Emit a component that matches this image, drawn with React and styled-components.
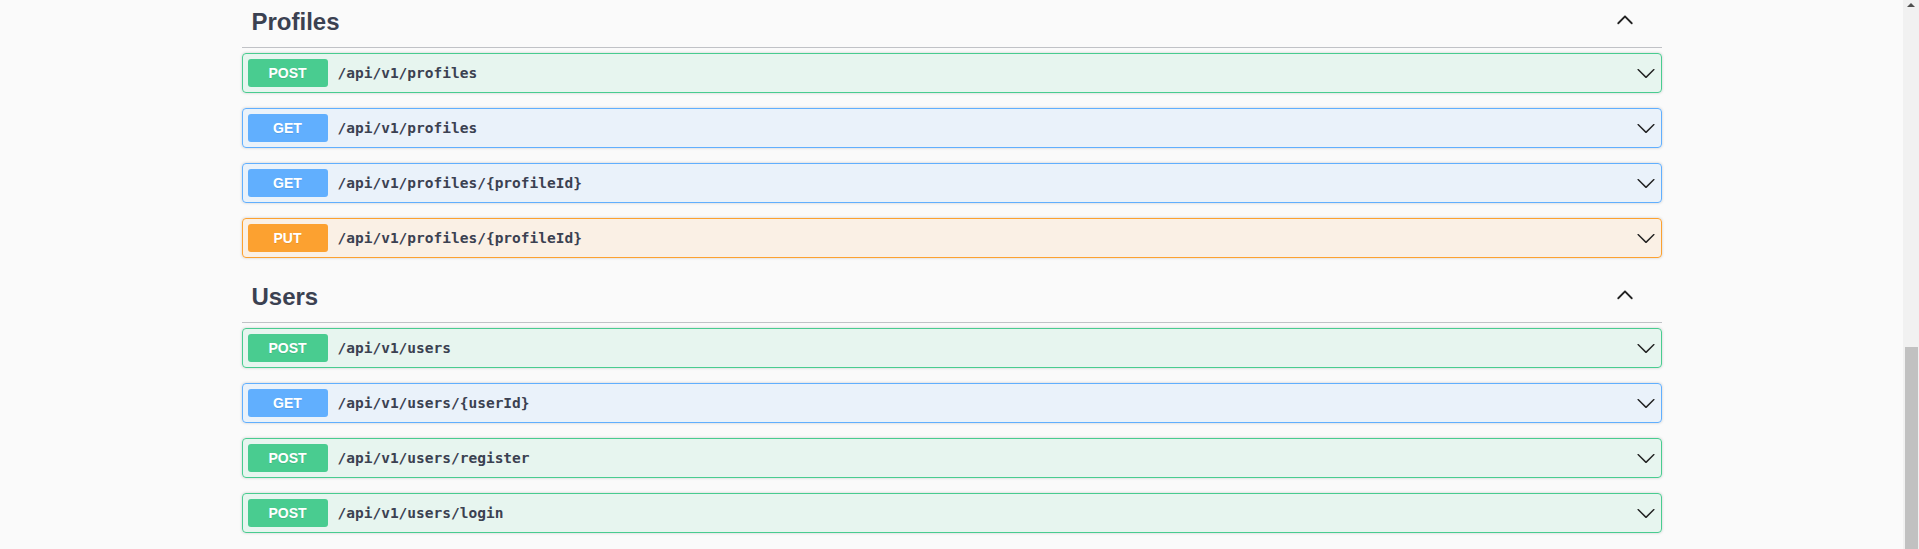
import React from "react";
import styled, { createGlobalStyle } from "styled-components";

const GlobalStyle = createGlobalStyle`
  html, body {
    margin: 0;
    padding: 0;
    background: #fafafa;
    overflow: hidden;
  }
`;

const methodColors = {
  POST: "#49cc90",
  GET: "#61affe",
  PUT: "#fca130",
};

const methodBg = {
  POST: "rgba(73,204,144,.1)",
  GET: "rgba(97,175,254,.1)",
  PUT: "rgba(252,161,48,.1)",
};

const Page = styled.div`
  display: flex;
  height: 549px;
  font-family: "Liberation Sans", Arial, sans-serif;
  color: #3b4151;
`;

const Main = styled.main`
  flex: 1;
  min-width: 0;
`;

const Wrapper = styled.div`
  max-width: 1460px;
  margin: -2px auto 0;
  padding: 0 20px;
  box-sizing: border-box;
`;

const TagHeading = styled.h3`
  display: flex;
  align-items: center;
  margin: 0 0 5px;
  padding: 10px 20px 11px 10px;
  border-bottom: 1px solid rgba(59, 65, 81, 0.3);
  font-size: 24px;
  line-height: 28px;
  font-weight: 700;
  color: #3b4151;

  span {
    flex: 1;
  }

  svg {
    margin-right: 7px;
    margin-bottom: 6px;
    fill: #222;
  }
`;

const OpBlock = styled.div`
  margin: 0 0 15px;
  border: 1px solid ${(p) => methodColors[p.$method]};
  border-radius: 4px;
  background: ${(p) => methodBg[p.$method]};
  box-shadow: 0 0 3px rgba(0, 0, 0, 0.19);
`;

const Summary = styled.div`
  display: flex;
  align-items: center;
  padding: 5px;

  svg {
    fill: #222;
    flex-shrink: 0;
  }
`;

const Method = styled.span`
  min-width: 80px;
  padding: 6px 0;
  border-radius: 3px;
  background: ${(p) => methodColors[p.$method]};
  color: #fff;
  font-size: 14px;
  line-height: 16px;
  font-weight: 700;
  text-align: center;
  text-shadow: 0 1px 0 rgba(0, 0, 0, 0.1);
`;

const Path = styled.span`
  flex: 1;
  padding: 0 10px;
  font-family: "DejaVu Sans Mono", "Liberation Mono", monospace;
  font-size: 14.5px;
  font-weight: 700;
  color: #3b4151;
`;

const ScrollRail = styled.div`
  width: 16px;
  background: #f1f1f1;
  display: flex;
  flex-direction: column;
  align-items: center;
`;

const RailArrow = styled.div`
  margin-top: 3px;
  width: 0;
  height: 0;
  border-left: 4px solid transparent;
  border-right: 4px solid transparent;
  border-bottom: 4px solid #505050;
`;

const Thumb = styled.div`
  margin-top: auto;
  margin-left: 1px;
  width: 13px;
  height: 202px;
  background: #c1c1c1;
`;

const ArrowUp = () => (
  <svg width="20" height="20" viewBox="0 0 20 20">
    <path d="M17.418 14.908c-.363.363-.95.363-1.313 0L10 8.802l-6.105 6.106c-.363.363-.95.363-1.313 0s-.363-.95 0-1.313l6.762-6.763c.362-.363.95-.363 1.313 0l6.761 6.763c.363.363.363.95 0 1.313z" />
  </svg>
);

const ArrowDown = () => (
  <svg width="20" height="20" viewBox="0 0 20 20">
    <path d="M17.418 6.109c.272-.268.709-.268.979 0s.271.701 0 .969l-7.908 7.83c-.27.268-.707.268-.979 0l-7.908-7.83c-.27-.268-.27-.701 0-.969.271-.268.709-.268.979 0L10 13.25l7.418-7.141z" />
  </svg>
);

const sections = [
  {
    name: "Profiles",
    ops: [
      ["POST", "/api/v1/profiles"],
      ["GET", "/api/v1/profiles"],
      ["GET", "/api/v1/profiles/{profileId}"],
      ["PUT", "/api/v1/profiles/{profileId}"],
    ],
  },
  {
    name: "Users",
    ops: [
      ["POST", "/api/v1/users"],
      ["GET", "/api/v1/users/{userId}"],
      ["POST", "/api/v1/users/register"],
      ["POST", "/api/v1/users/login"],
    ],
  },
];

export default function App() {
  return (
    <Page>
      <GlobalStyle />
      <Main>
        <Wrapper>
          {sections.map((s) => (
            <section key={s.name}>
              <TagHeading>
                <span>{s.name}</span>
                <ArrowUp />
              </TagHeading>
              {s.ops.map(([method, path]) => (
                <OpBlock key={method + path} $method={method}>
                  <Summary>
                    <Method $method={method}>{method}</Method>
                    <Path>{path}</Path>
                    <ArrowDown />
                  </Summary>
                </OpBlock>
              ))}
            </section>
          ))}
        </Wrapper>
      </Main>
      <ScrollRail>
        <RailArrow />
        <Thumb />
      </ScrollRail>
    </Page>
  );
}
